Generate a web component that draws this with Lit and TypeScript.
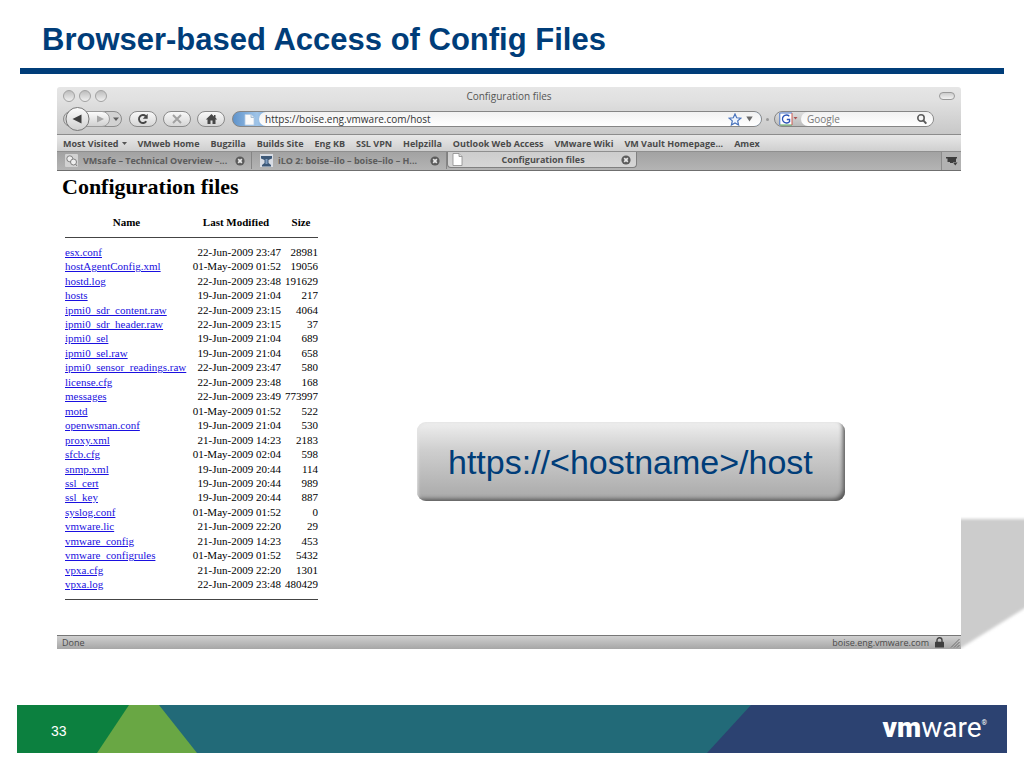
import { LitElement, html, css, svg } from "lit";
import { customElement } from "lit/decorators.js";

type FileRow = [name: string, modified: string, size: string];

const FILES: FileRow[] = [
  ["esx.conf", "22-Jun-2009 23:47", "28981"],
  ["hostAgentConfig.xml", "01-May-2009 01:52", "19056"],
  ["hostd.log", "22-Jun-2009 23:48", "191629"],
  ["hosts", "19-Jun-2009 21:04", "217"],
  ["ipmi0_sdr_content.raw", "22-Jun-2009 23:15", "4064"],
  ["ipmi0_sdr_header.raw", "22-Jun-2009 23:15", "37"],
  ["ipmi0_sel", "19-Jun-2009 21:04", "689"],
  ["ipmi0_sel.raw", "19-Jun-2009 21:04", "658"],
  ["ipmi0_sensor_readings.raw", "22-Jun-2009 23:47", "580"],
  ["license.cfg", "22-Jun-2009 23:48", "168"],
  ["messages", "22-Jun-2009 23:49", "773997"],
  ["motd", "01-May-2009 01:52", "522"],
  ["openwsman.conf", "19-Jun-2009 21:04", "530"],
  ["proxy.xml", "21-Jun-2009 14:23", "2183"],
  ["sfcb.cfg", "01-May-2009 02:04", "598"],
  ["snmp.xml", "19-Jun-2009 20:44", "114"],
  ["ssl_cert", "19-Jun-2009 20:44", "989"],
  ["ssl_key", "19-Jun-2009 20:44", "887"],
  ["syslog.conf", "01-May-2009 01:52", "0"],
  ["vmware.lic", "21-Jun-2009 22:20", "29"],
  ["vmware_config", "21-Jun-2009 14:23", "453"],
  ["vmware_configrules", "01-May-2009 01:52", "5432"],
  ["vpxa.cfg", "21-Jun-2009 22:20", "1301"],
  ["vpxa.log", "22-Jun-2009 23:48", "480429"],
];

const BOOKMARKS = [
  "VMweb Home", "Bugzilla", "Builds Site", "Eng KB", "SSL VPN", "Helpzilla",
  "Outlook Web Access", "VMware Wiki", "VM Vault Homepage...", "Amex",
];

const page = svg`
  <path d="M1 .5h6l3 3v9h-9z" fill="#fff" stroke="#8a8a8a" stroke-width=".8"/>
  <path d="M7 .5v3h3" fill="#ddd" stroke="#8a8a8a" stroke-width=".8"/>`;

const closeIcon = html`<svg class="close" width="10" height="10" viewBox="0 0 10 10" aria-hidden="true">
  <circle cx="5" cy="5" r="4.6" fill="#5c5c5c"/>
  <path d="M3.2 3.2l3.6 3.6M6.8 3.2L3.2 6.8" stroke="#e8e8e8" stroke-width="1.7"/>
</svg>`;

/** The Firefox window with its toolbars, tabs, file listing and status bar. */
@customElement("browser-window")
export class BrowserWindow extends LitElement {
  static styles = css`
    :host {
      display: flex;
      flex-direction: column;
      font-family: "Open Sans", "Noto Sans", sans-serif;
      font-size: 9px;
      color: #4a4a4a;
      background: #fff;
    }
    svg { display: block; flex: none; }
    button, input { font: inherit; color: inherit; margin: 0; padding: 0; border: 0; background: none; }
    a { color: inherit; text-decoration: none; }
    .chrome {
      background: linear-gradient(#e6e6e6, #e0e0e0 30%, #c8c8c8);
      border-bottom: 1px solid #8c8c8c;
      border-radius: 3px 3px 0 0;
    }
    .titlebar {
      display: grid;
      grid-template-columns: 64px 1fr 64px;
      align-items: center;
      height: 17px;
      padding: 0 6px;
      font-size: 10px;
      color: #555;
    }
    .lights { display: flex; gap: 4px; }
    .light {
      width: 12px; height: 12px;
      box-sizing: border-box;
      border: 1px solid #a2a2a2;
      border-radius: 50%;
      background: linear-gradient(#bdbdbd, #f0f0f0);
    }
    .caption { text-align: center; }
    .pill {
      justify-self: end;
      width: 16px; height: 8px;
      box-sizing: border-box;
      border: 1px solid #999;
      border-radius: 4px;
      background: linear-gradient(#ccc, #f2f2f2);
    }
    .nav {
      display: flex;
      align-items: center;
      height: 30px;
      padding: 0 27px 0 5px;
    }
    .tool {
      display: flex;
      align-items: center;
      justify-content: center;
      width: 28px; height: 16px;
      box-sizing: border-box;
      border: 1px solid #8a8a8a;
      border-radius: 8px;
      background: linear-gradient(#f8f8f8, #d6d6d6);
      margin-right: 6px;
    }
    .history { margin-right: 5px; display: flex; }
    .address {
      flex: 1;
      display: flex;
      align-items: center;
      height: 16px;
      box-sizing: border-box;
      border: 1px solid #858585;
      border-radius: 8px;
      background: linear-gradient(90deg, #5f93cb, #9fc4e8 24px, #86b0dc 32px);
      margin-left: 1px;
      overflow: hidden;
    }
    .identity { width: 23px; display: flex; justify-content: flex-end; }
    .field {
      flex: 1;
      min-width: 0;
      display: flex;
      align-items: center;
      height: 14px;
      background: linear-gradient(#f1f1f1, #fff);
      border-radius: 7px 0 0 7px;
      font-size: 10px;
      padding-left: 6px;
    }
    .field input { flex: 1; min-width: 0; height: 14px; color: #333; outline: none; }
    .identity + .field { margin-left: 3px; padding-right: 8px; gap: 4px; }
    .dot { width: 3px; height: 3px; border-radius: 50%; background: #999; margin: 0 5px 0 4px; }
    .search {
      width: 160px;
      display: flex;
      align-items: center;
      height: 16px;
      box-sizing: border-box;
      border: 1px solid #858585;
      border-radius: 8px;
      background: linear-gradient(#ddd, #bbb);
      overflow: hidden;
    }
    .engine { width: 26px; padding-left: 4px; box-sizing: border-box; }
    .search .field { padding-right: 5px; }
    .search input::placeholder { color: #777; opacity: 1; }
    .bookmarks {
      display: flex;
      align-items: center;
      gap: 11px;
      height: 16px;
      padding: 0 6px;
      background: linear-gradient(#e8e8e8, #cfcfcf);
      border-bottom: 1px solid #8f8f8f;
      font-weight: 700;
      white-space: nowrap;
    }
    .menu { display: flex; align-items: center; gap: 3px; }
    .tabs {
      display: grid;
      grid-template-columns: 195px 195px 190px 1fr 20px;
      height: 18px;
      background: linear-gradient(#a2a2a2, #b4b4b4);
      border-bottom: 1px solid #6f6f6f;
    }
    .tab {
      display: grid;
      grid-template-columns: 13px 1fr 10px;
      align-items: center;
      gap: 5px;
      height: 17px;
      padding: 0 6px 0 8px;
      box-sizing: border-box;
      border-right: 1px solid #858585;
      font-weight: 700;
      color: #5c5c5c;
      text-align: left;
      white-space: nowrap;
    }
    .tab.active {
      height: 16px;
      padding: 0 5px 0 4px;
      color: #4d4d4d;
      background: linear-gradient(#cdcdcd, #d6d6d6);
      border: 1px solid #808080;
      border-top: 0;
      border-radius: 0 0 4px 4px;
      text-align: center;
    }
    .all {
      display: flex; align-items: center; justify-content: center;
      border-left: 1px solid #8c8c8c;
      background: #b2b2b2;
    }
    .page {
      flex: 1;
      padding: 4px 5px;
      font-family: "Liberation Serif", serif;
      font-size: 11px;
      line-height: 13px;
      color: #000;
    }
    h2 { margin: 0; font-size: 22px; line-height: 24px; }
    table { border-collapse: collapse; margin: 9px 0 0 3px; width: 253px; }
    th, td { padding: 0; text-align: right; white-space: nowrap; }
    thead th { height: 29px; text-align: center; vertical-align: middle; }
    thead th + th { padding-left: 3px; }
    thead tr { border-bottom: 1px solid #444; }
    .gap td { height: 7px; }
    .files { height: 347px; }
    .files td:first-child { text-align: left; }
    .files td:nth-child(2), thead th:nth-child(2) { width: 90px; }
    .files td:nth-child(3), thead th:nth-child(3) { width: 34px; }
    .files a { color: #1a10e0; text-decoration: underline; }
    .end td { border-bottom: 1px solid #444; height: 7px; }
    .status {
      display: flex;
      align-items: center;
      gap: 6px;
      height: 13px;
      padding: 0 1px 0 5px;
      border-top: 1px solid #777;
      background: linear-gradient(#d0d0d0, #a6a6a6);
    }
    .spring { flex: 1; }
  `;

  render() {
    return html`
      <div class="chrome">
        <div class="titlebar">
          <div class="lights"><span class="light"></span><span class="light"></span><span class="light"></span></div>
          <div class="caption">Configuration files</div>
          <span class="pill"></span>
        </div>
        <div class="nav">
          <button class="history" aria-label="Back and forward">
            <svg width="62" height="26" viewBox="0 0 62 26">
              <defs><linearGradient id="g" x2="0" y2="1"><stop stop-color="#fdfdfd"/><stop offset="1" stop-color="#cfcfcf"/></linearGradient></defs>
              <rect x="1.5" y="5.5" width="58" height="15" rx="7.5" fill="#d2d2d2" stroke="#8c8c8c"/>
              <path d="M20 5.500h20a7.500 7.500 0 0 1 0 15H20z" fill="url(#g)" stroke="#9a9a9a"/>
              <circle cx="15.500" cy="13" r="11.500" fill="url(#g)" stroke="#777"/>
              <path d="M19.500 8.500v9l-9-4.500z" fill="#3f3f3f"/>
              <path d="M35 9.500v7l7-3.500z" fill="#a6a6a6"/>
              <path d="M51 11.500h6l-3 3.500z" fill="#5e5e5e"/>
            </svg>
          </button>
          <button class="tool" aria-label="Reload">
            <svg width="12" height="12" viewBox="0 0 12 12"><path d="M9.300 8.300A4 4 0 1 1 8.800 3.200" fill="none" stroke="#474747" stroke-width="1.900"/><path d="M10.700.8v5H5.800z" fill="#474747"/></svg>
          </button>
          <button class="tool" aria-label="Stop">
            <svg width="12" height="12" viewBox="0 0 12 12"><path d="M2 2l8 8M10 2l-8 8" stroke="#a2a2a2" stroke-width="2"/></svg>
          </button>
          <button class="tool" aria-label="Home">
            <svg width="13" height="12" viewBox="0 0 13 12"><path d="M6.500 1L.8 6.500h1.700V11h3V7.500h2V11h3V6.500h1.700L10.500 4.800V2H9v1.400z" fill="#474747"/></svg>
          </button>
          <div class="address">
            <span class="identity"><svg width="13" height="13" viewBox="0 0 13 13"><path d="M2 1.500h6l3 3V12H2z" fill="#fafafa" stroke="#b4cce4" stroke-width=".8"/><path d="M8 1.500v3h3" fill="#dde8f2" stroke="#9ab4cc" stroke-width=".8"/></svg></span>
            <div class="field">
              <input aria-label="Address" .value=${"https://boise.eng.vmware.com/host"}>
              <svg width="14" height="13" viewBox="0 0 14 13"><path d="M7 1l1.700 3.800 4.100.4-3.100 2.700.9 4.100L7 9.900 3.400 12l.9-4.100L1.200 5.200l4.100-.4z" fill="#edf4ff" stroke="#4a74bd" stroke-width="1.200"/></svg>
              <svg width="7" height="6" viewBox="0 0 7 6"><path d="M.3.500h6.400L3.500 5.500z" fill="#6a6a6a"/></svg>
            </div>
          </div>
          <span class="dot"></span>
          <div class="search">
            <svg class="engine" width="26" height="14" viewBox="0 0 22 14">
              <rect x="1" y="1" width="12" height="12" fill="#fff"/>
              <path d="M.8 13V1H13" fill="none" stroke="#4c7bd0"/><path d="M1 13h12" stroke="#58a65c"/><path d="M13 1v12" stroke="#cf5a50"/>
              <path d="M10.300 4.200A4 4 0 1 0 10.600 9.500V7.500H7.800" fill="none" stroke="#2c55b8" stroke-width="1.300"/>
              <path d="M14.500 5h4l-2 2.600z" fill="#a55"/>
            </svg>
            <div class="field">
              <input aria-label="Search" placeholder="Google">
              <svg width="12" height="12" viewBox="0 0 12 12"><circle cx="5" cy="5" r="3.200" fill="none" stroke="#5d5d5d" stroke-width="1.600"/><path d="M7.300 7.300L10.300 10.600" stroke="#5d5d5d" stroke-width="2"/></svg>
            </div>
          </div>
        </div>
      </div>
      <nav class="bookmarks">
        <a class="menu" href="#">Most Visited
          <svg width="5" height="3" viewBox="0 0 5 3"><path d="M0 0h5L2.500 3z" fill="#555"/></svg></a>
        ${BOOKMARKS.map((b) => html`<a href="#">${b}</a>`)}
      </nav>
      <div class="tabs">
        <button class="tab">
          <svg width="13" height="13" viewBox="0 0 13 13"><rect width="13" height="13" rx="1" fill="#d2d2d2"/><circle cx="4.800" cy="4.800" r="3" fill="#eee" stroke="#808080"/><circle cx="8.500" cy="8" r="3" fill="#eee" stroke="#808080"/><path d="M10.500 10l1.500 2" stroke="#808080"/></svg>
          <span>VMsafe – Technical Overview –...</span>${closeIcon}
        </button>
        <button class="tab">
          <svg width="13" height="13" viewBox="0 0 13 13"><rect width="13" height="13" fill="#d8dce4"/><path d="M1 2h11v2.500L8.500 6v3l2.500 2v1.500H2V11l2.500-2V6L1 4.500z" fill="#3c5878"/><path d="M5.500 5h2v5h-2z" fill="#7f9cc0"/></svg>
          <span>iLO 2: boise–ilo – boise–ilo – H...</span>${closeIcon}
        </button>
        <button class="tab active">
          <svg width="11" height="13" viewBox="0 0 11 13">${page}</svg>
          <span>Configuration files</span>${closeIcon}
        </button>
        <span></span>
        <button class="all" aria-label="List all tabs">
          <svg width="12" height="10" viewBox="0 0 12 10"><path d="M0 1h11v1.500h-1V6H7v1H4V6H1.500V2.500H0z" fill="#3d3d3d"/><path d="M7 6.500h4.500L9.300 9.500z" fill="#3d3d3d"/></svg>
        </button>
      </div>
      <div class="page">
        <h2>Configuration files</h2>
        <table>
          <thead><tr><th>Name</th><th>Last Modified</th><th>Size</th></tr></thead>
          <tbody class="gap"><tr><td colspan="3"></td></tr></tbody>
          <tbody class="files">
            ${FILES.map(([n, d, s]) => html`<tr><td><a href="#">${n}</a></td><td>${d}</td><td>${s}</td></tr>`)}
          </tbody>
          <tbody class="end"><tr><td colspan="3"></td></tr></tbody>
        </table>
      </div>
      <div class="status">
        <span>Done</span><span class="spring"></span><span>boise.eng.vmware.com</span>
        <svg width="9" height="11" viewBox="0 0 9 11"><path d="M2 5V3.200a2.500 2.500 0 0 1 5 0V5" fill="none" stroke="#444" stroke-width="1.400"/><rect y="4.800" width="9" height="5.700" rx=".6" fill="#3f3f3f"/></svg>
        <svg width="10" height="11" viewBox="0 0 10 11"><path d="M1 10.500L9.500 2M4 10.500l5.500-5.500M7 10.500L9.500 8" stroke="#666" stroke-width=".9"/></svg>
      </div>
    `;
  }
}

/** One slide: title, browser window with a callout on it, and the footer band. */
@customElement("app-root")
export class AppRoot extends LitElement {
  static styles = css`
    :host {
      display: flex;
      flex-direction: column;
      box-sizing: border-box;
      min-height: 100vh;
      padding-bottom: 15px;
      background: #fff;
      font-family: "Liberation Sans", Arial, sans-serif;
      overflow: hidden;
    }
    header { margin: 0 20px; padding: 22px 22px 10px; border-bottom: 6px solid #003d79; }
    h1 { margin: 0; font-size: 31px; line-height: 36px; color: #003d79; white-space: nowrap; }
    main { position: relative; flex: 1; display: flex; margin: 13px 63px 56px 57px; }
    browser-window { flex: 1; min-width: 0; position: relative; }
    .shadow { position: absolute; left: 100%; bottom: 0; width: 63px; height: 134px; overflow: hidden; }
    .callout {
      position: absolute;
      left: 360px;
      top: 335px;
      padding: 19px 32px 17px 31px;
      border-radius: 9px;
      background: linear-gradient(#efefef, #cfcfcf 35%, #a8a8a8);
      box-shadow: inset -4px -4px 4px -2px #555, inset 1px 1px 3px #e4e4e4;
      font-size: 34px;
      line-height: 43px;
      color: #003d79;
      white-space: nowrap;
    }
    footer { display: flex; justify-content: space-between; height: 48px; margin: 0 17px; background: #226a78; color: #fff; }
    .light { width: 180px; background: #69a744; clip-path: polygon(0 0, 142px 0, 100% 100%, 0 100%); }
    .green {
      display: flex; align-items: center;
      width: 113px; height: 100%;
      box-sizing: border-box;
      padding: 4px 0 0 34px;
      background: #0c803f;
      clip-path: polygon(0 0, 112px 0, 80px 100%, 0 100%);
      font-size: 14px;
    }
    .blue {
      display: flex; align-items: center; justify-content: flex-end;
      width: 300px;
      box-sizing: border-box;
      padding: 0 20px 2px 0;
      background: #2c4271;
      clip-path: polygon(44px 0, 100% 0, 100% 100%, 0 100%);
      font-family: Roboto, sans-serif;
      font-size: 28px;
      line-height: 32px;
    }
    .blue b { font-weight: 900; }
    .blue sup { padding-bottom: 11px; font-size: 7px; line-height: 8px; }
  `;

  render() {
    return html`
      <header><h1>Browser-based Access of Config Files</h1></header>
      <main>
        <svg class="shadow" viewBox="0 0 63 134" aria-hidden="true">
          <defs><filter id="soft" x="-20%" y="-20%" width="140%" height="140%"><feGaussianBlur stdDeviation="1.500"/></filter></defs>
          <path d="M-10 4H80V83L-10 139z" fill="#ccc" filter="url(#soft)"/>
        </svg>
        <browser-window></browser-window>
        <div class="callout">https://&lt;hostname&gt;/host</div>
      </main>
      <footer>
        <div class="light"><div class="green">33</div></div>
        <div class="blue"><b>vm</b><span>ware</span><sup>®</sup></div>
      </footer>
    `;
  }
}
